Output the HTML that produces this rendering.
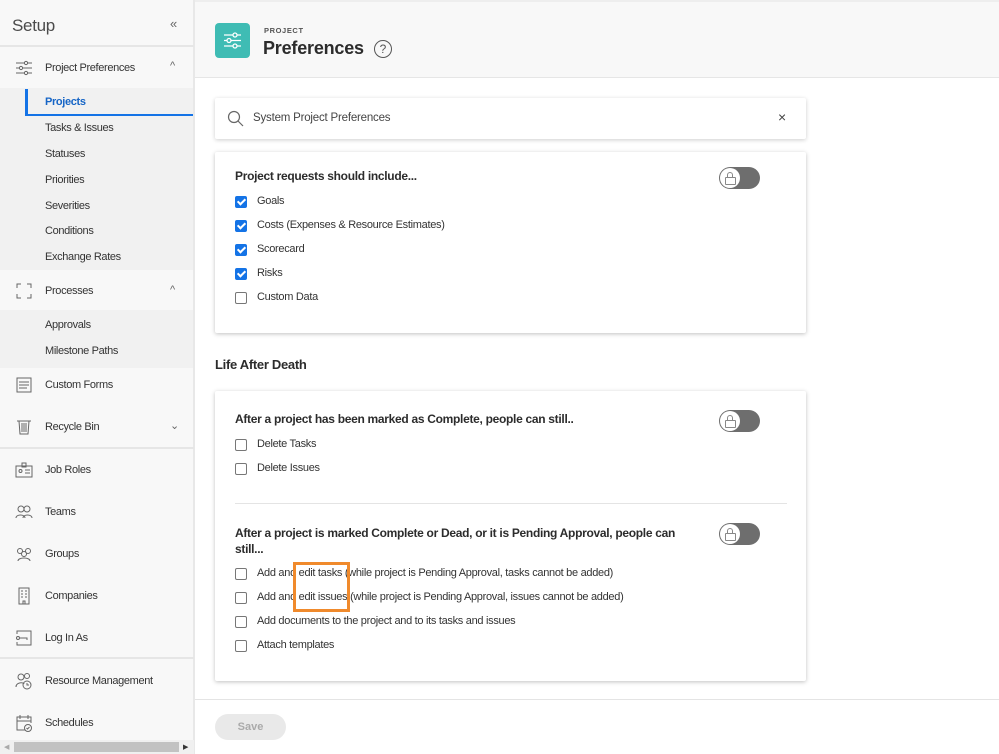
<!DOCTYPE html>
<html><head><meta charset="utf-8"><style>
*{box-sizing:border-box;margin:0;padding:0}
body{width:999px;height:754px;overflow:hidden;font-family:"Liberation Sans",sans-serif;background:#fff;position:relative;color:#2c2c2c}
.sb{position:absolute;left:0;top:0;width:195px;height:754px;background:#f8f8f8;border-right:2px solid #e8e8e8}
.sb .t{position:absolute;left:12px;top:16px;font-size:17px;color:#4b4b4b;letter-spacing:-.3px}
.sb .cc{position:absolute;left:170px;top:16px;font-size:13px;color:#666}
.hr{position:absolute;left:0;width:194px;height:2px;background:#e6e6e6}
.it{position:absolute;left:45px;font-size:11px;color:#333;letter-spacing:-.35px}
.ic{position:absolute;left:15px;width:18px;height:18px}
.sub{position:absolute;left:0;width:193px;background:#f1f1f1}
.chev{position:absolute;left:170px;font-size:11px;color:#666}
.main{position:absolute;left:195px;top:0;right:0;bottom:0}
.hd{position:absolute;left:0;top:0;width:804px;height:78px;background:#f8f8f8;border-bottom:1px solid #e6e6e6;border-top:2px solid #eee}
.card{position:absolute;left:20px;width:591px;background:#fff;box-shadow:0 1px 4px rgba(0,0,0,.25);border-radius:2px}
.h{position:absolute;font-size:12px;font-weight:bold;color:#2c2c2c;letter-spacing:-.3px}
.cb{position:absolute;left:20px;font-size:11px;color:#333;letter-spacing:-.3px}
.cb i{position:absolute;left:0;top:1px;width:12px;height:12px;border:1.5px solid #777;border-radius:2px}
.cb i.on{background:#1473e6;border-color:#1473e6}
.cb i.on:after{content:"";position:absolute;left:3px;top:0px;width:3px;height:6px;border:solid #fff;border-width:0 2px 2px 0;transform:rotate(45deg)}
.cb span{position:absolute;left:22px;top:0;white-space:nowrap}
.tg{position:absolute;left:504px;width:41px;height:22px;border-radius:11px;background:#6e6e6e}
.tg:before{content:"";position:absolute;left:1px;top:1px;width:20px;height:20px;border-radius:50%;background:#fff;}
.tg:after{content:"";position:absolute;left:6px;top:10px;width:9px;height:6px;border:1px solid #888;border-radius:1px}
.tg b{position:absolute;left:7.5px;top:5px;width:6px;height:6px;border:1px solid #888;border-bottom:none;border-radius:3px 3px 0 0;z-index:2}
</style></head><body>
<div class="sb">
<div class="t">Setup</div><div class="cc">«</div>
<div class="hr" style="top:45px"></div>
<svg class="ic" style="top:59px" viewBox="0 0 18 18" fill="none" stroke="#666" stroke-width="1"><path d="M1 4h16M1 9h16M1 14h16"/><circle cx="11" cy="4" r="1.6" fill="#f8f8f8"/><circle cx="6" cy="9" r="1.6" fill="#f8f8f8"/><circle cx="11" cy="14" r="1.6" fill="#f8f8f8"/></svg>
<div class="it" style="top:62px">Project Preferences</div><div class="chev" style="top:60px">^</div>
<div class="sub" style="top:88px;height:182px"></div>
<div style="position:absolute;left:25px;top:89px;width:3px;height:27px;background:#1473e6"></div>
<div style="position:absolute;left:25px;top:114px;width:168px;height:2px;background:#1473e6"></div>
<div class="it" style="top:96px;color:#1665c6;font-weight:bold">Projects</div>
<div class="it" style="top:122px">Tasks &amp; Issues</div>
<div class="it" style="top:148px">Statuses</div>
<div class="it" style="top:174px">Priorities</div>
<div class="it" style="top:200px">Severities</div>
<div class="it" style="top:225px">Conditions</div>
<div class="it" style="top:251px">Exchange Rates</div>
<svg class="ic" style="top:282px" viewBox="0 0 18 18" fill="none" stroke="#666" stroke-width="1"><path d="M2 6V2h4M12 2h4v4M16 12v4h-4M6 16H2v-4"/></svg>
<div class="it" style="top:285px">Processes</div><div class="chev" style="top:284px">^</div>
<div class="sub" style="top:310px;height:58px"></div>
<div class="it" style="top:319px">Approvals</div>
<div class="it" style="top:345px">Milestone Paths</div>
<svg class="ic" style="top:376px" viewBox="0 0 18 18" fill="none" stroke="#666" stroke-width="1"><rect x="2" y="2" width="14" height="14"/><path d="M4 6h10M4 9h10M4 12h8"/></svg>
<div class="it" style="top:379px">Custom Forms</div>
<svg class="ic" style="top:418px" viewBox="0 0 18 18" fill="none" stroke="#666" stroke-width="1"><path d="M2 3h14M4 3l1 13h8l1-13M7 5v9M9 5v9M11 5v9"/></svg>
<div class="it" style="top:421px">Recycle Bin</div><div class="chev" style="top:419px">⌄</div>
<div class="hr" style="top:447px"></div>
<svg class="ic" style="top:461px" viewBox="0 0 18 18" fill="none" stroke="#666" stroke-width="1"><rect x="1" y="5" width="16" height="11"/><rect x="7" y="2" width="4" height="4"/><circle cx="5.5" cy="10" r="1.5"/><path d="M10 9h5M10 12h5"/></svg>
<div class="it" style="top:464px">Job Roles</div>
<svg class="ic" style="top:503px" viewBox="0 0 18 18" fill="none" stroke="#666" stroke-width="1"><circle cx="6" cy="6" r="3"/><circle cx="12" cy="6" r="3"/><path d="M1 15c0-4 9-4 9 0M8 15c0-4 9-4 9 0"/></svg>
<div class="it" style="top:506px">Teams</div>
<svg class="ic" style="top:545px" viewBox="0 0 18 18" fill="none" stroke="#666" stroke-width="1"><circle cx="5" cy="6" r="2.5"/><circle cx="13" cy="6" r="2.5"/><circle cx="9" cy="9" r="2.5"/><path d="M3 16c0-4 12-4 12 0"/></svg>
<div class="it" style="top:548px">Groups</div>
<svg class="ic" style="top:587px" viewBox="0 0 18 18" fill="none" stroke="#666" stroke-width="1"><rect x="4" y="1" width="10" height="16"/><path d="M6 4h2M10 4h2M6 7h2M10 7h2M6 10h2M10 10h2M8 17v-3h2v3"/></svg>
<div class="it" style="top:590px">Companies</div>
<svg class="ic" style="top:629px" viewBox="0 0 18 18" fill="none" stroke="#666" stroke-width="1"><path d="M2 5V2h14v14H2v-3"/><circle cx="3" cy="9" r="1.5"/><path d="M5 9h7v2"/></svg>
<div class="it" style="top:632px">Log In As</div>
<div class="hr" style="top:657px"></div>
<svg class="ic" style="top:672px" viewBox="0 0 18 18" fill="none" stroke="#666" stroke-width="1"><circle cx="6" cy="5" r="3"/><circle cx="12" cy="4" r="2.5"/><path d="M1 15c0-5 8-5 8-3"/><circle cx="12" cy="13" r="4"/><path d="M12 11v2h2"/></svg>
<div class="it" style="top:675px">Resource Management</div>
<svg class="ic" style="top:714px" viewBox="0 0 18 18" fill="none" stroke="#666" stroke-width="1"><path d="M10 16H2V3h14v6M2 7h14M5 1v4M13 1v4"/><circle cx="13" cy="14" r="3.5"/><path d="M11.5 14l1 1 2-2"/></svg>
<div class="it" style="top:717px">Schedules</div>
<div style="position:absolute;left:0;top:740px;width:194px;height:14px;background:#f0f0f0"></div>
<div style="position:absolute;left:14px;top:742px;width:165px;height:10px;background:#c2c2c2"></div>
<div style="position:absolute;left:4px;top:743px;font-size:7px;color:#aaa">◀</div>
<div style="position:absolute;left:183px;top:743px;font-size:7px;color:#333">▶</div>
</div>
<div class="main">
<div class="hd">
<div style="position:absolute;left:20px;top:21px;width:35px;height:35px;background:#3fbcb4;border-radius:4px"></div>
<svg style="position:absolute;left:26px;top:27px" width="23" height="23" viewBox="0 0 23 23" fill="none" stroke="#fff" stroke-width="1.3"><path d="M3 6h17M3 11.5h17M3 17h17"/><circle cx="14" cy="6" r="2" fill="#3fbcb4"/><circle cx="8" cy="11.5" r="2" fill="#3fbcb4"/><circle cx="14" cy="17" r="2" fill="#3fbcb4"/></svg>
<div style="position:absolute;left:69px;top:24px;font-size:7.5px;font-weight:bold;letter-spacing:.6px;color:#555">PROJECT</div>
<div style="position:absolute;left:68px;top:36px;font-size:18px;font-weight:bold;color:#2c2c2c;letter-spacing:-.2px">Preferences</div>
<div style="position:absolute;left:179px;top:38px;width:18px;height:18px;border:1.2px solid #555;border-radius:50%;font-size:12px;text-align:center;line-height:16px;color:#555">?</div>
</div>
<div style="position:absolute;left:20px;top:98px;width:591px;height:41px;background:#fff;box-shadow:0 1px 4px rgba(0,0,0,.2);border-radius:2px">
<svg style="position:absolute;left:12px;top:12px" width="17" height="17" viewBox="0 0 17 17" fill="none" stroke="#666" stroke-width="1.2"><circle cx="7" cy="7" r="5.5"/><path d="M11 11l5 5"/></svg>
<div style="position:absolute;left:38px;top:14px;font-size:11.5px;color:#444;letter-spacing:-.2px">System Project Preferences</div>
<div style="position:absolute;left:563px;top:11px;font-size:14px;color:#444">×</div>
</div>
<div class="card" style="top:152px;height:181px">
<div class="h" style="left:20px;top:17px">Project requests should include...</div>
<div class="tg" style="top:15px"><b></b></div>
<div class="cb" style="top:43px"><i class="on"></i><span>Goals</span></div>
<div class="cb" style="top:67px"><i class="on"></i><span>Costs (Expenses &amp; Resource Estimates)</span></div>
<div class="cb" style="top:91px"><i class="on"></i><span>Scorecard</span></div>
<div class="cb" style="top:115px"><i class="on"></i><span>Risks</span></div>
<div class="cb" style="top:139px"><i></i><span>Custom Data</span></div>
</div>
<div style="position:absolute;left:20px;top:357px;font-size:13px;font-weight:bold;color:#2c2c2c;letter-spacing:-.3px">Life After Death</div>
<div class="card" style="top:391px;height:290px">
<div class="h" style="left:20px;top:21px">After a project has been marked as Complete, people can still..</div>
<div class="tg" style="top:19px"><b></b></div>
<div class="cb" style="top:47px"><i></i><span>Delete Tasks</span></div>
<div class="cb" style="top:71px"><i></i><span>Delete Issues</span></div>
<div style="position:absolute;left:20px;top:112px;width:552px;height:1px;background:#e4e4e4"></div>
<div class="h" style="left:20px;top:134px;line-height:16px;width:450px">After a project is marked Complete or Dead, or it is Pending Approval, people can still...</div>
<div class="tg" style="top:132px"><b></b></div>
<div class="cb" style="top:176px"><i></i><span>Add and edit tasks (while project is Pending Approval, tasks cannot be added)</span></div>
<div class="cb" style="top:200px"><i></i><span>Add and edit issues (while project is Pending Approval, issues cannot be added)</span></div>
<div class="cb" style="top:224px"><i></i><span>Add documents to the project and to its tasks and issues</span></div>
<div class="cb" style="top:248px"><i></i><span>Attach templates</span></div>
</div>
<div style="position:absolute;left:98px;top:562px;width:57px;height:50px;border:3px solid #f08a2c"></div>
<div style="position:absolute;left:0;top:699px;width:804px;height:1px;background:#e4e4e4"></div>
<div style="position:absolute;left:20px;top:714px;width:71px;height:26px;border-radius:13px;background:#e9e9e9;color:#aaa;font-size:11px;font-weight:bold;text-align:center;line-height:26px">Save</div>
</div>
</body></html>
